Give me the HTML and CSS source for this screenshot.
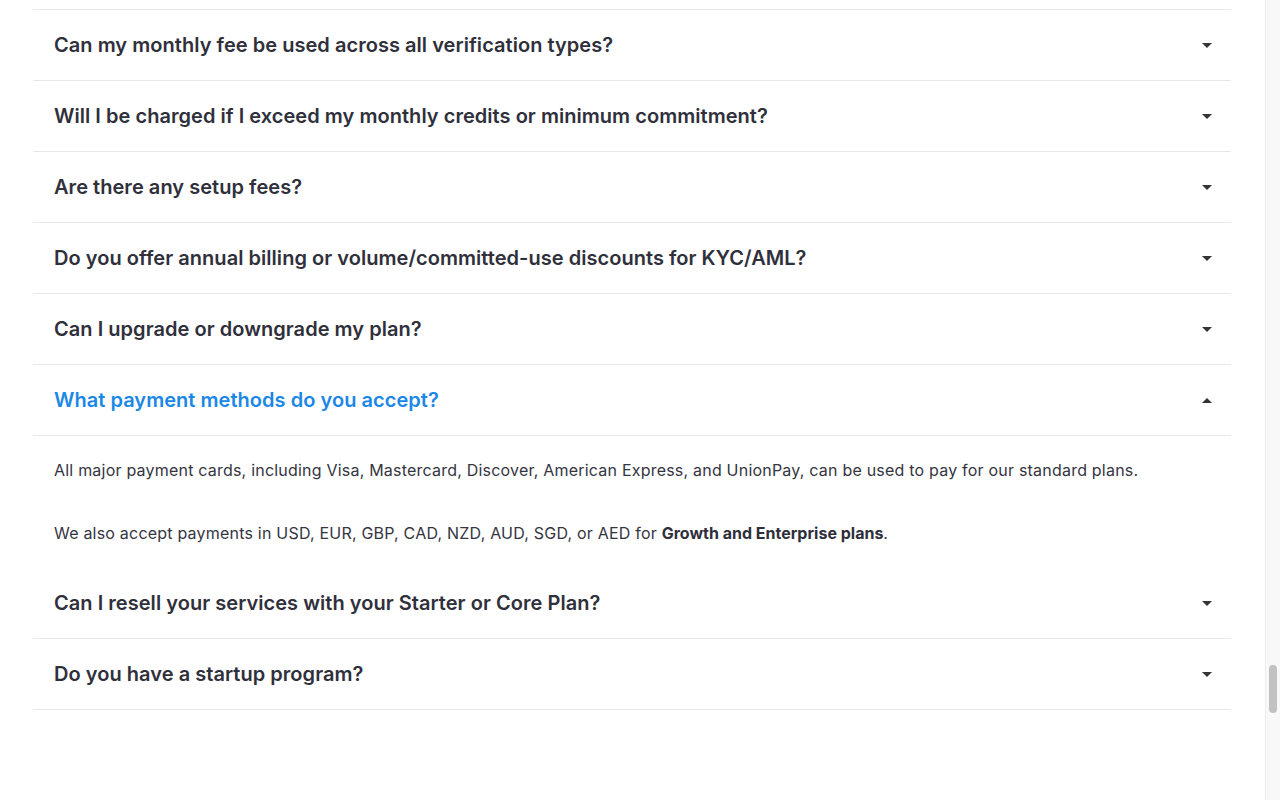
FILE: index.html
```html
<!DOCTYPE html>
<html lang="en">
<head>
<meta charset="utf-8">
<title>FAQ</title>
<link rel="stylesheet" href="styles.css">
</head>
<body>
<main class="page">
  <section class="faq">
    <div class="faq-item"><div class="q"><span class="q-text">Can my monthly fee be used across all verification types?</span><span class="caret down"></span></div></div>
    <div class="faq-item"><div class="q"><span class="q-text">Will I be charged if I exceed my monthly credits or minimum commitment?</span><span class="caret down"></span></div></div>
    <div class="faq-item"><div class="q"><span class="q-text">Are there any setup fees?</span><span class="caret down"></span></div></div>
    <div class="faq-item"><div class="q"><span class="q-text">Do you offer annual billing or volume/committed-use discounts for KYC/AML?</span><span class="caret down"></span></div></div>
    <div class="faq-item"><div class="q"><span class="q-text">Can I upgrade or downgrade my plan?</span><span class="caret down"></span></div></div>
    <div class="faq-item open"><div class="q"><span class="q-text">What payment methods do you accept?</span><span class="caret up"></span></div>
      <div class="answer">
        <p>All major payment cards, including Visa, Mastercard, Discover, American Express, and UnionPay, can be used to pay for our standard plans.</p>
        <p>We also accept payments in USD, EUR, GBP, CAD, NZD, AUD, SGD, or AED for <strong>Growth and Enterprise plans</strong>.</p>
      </div>
    </div>
    <div class="faq-item"><div class="q"><span class="q-text">Can I resell your services with your Starter or Core Plan?</span><span class="caret down"></span></div></div>
    <div class="faq-item"><div class="q"><span class="q-text">Do you have a startup program?</span><span class="caret down"></span></div></div>
  </section>
</main>
<div class="scrollbar"><div class="thumb"></div></div>
</body>
</html>
```
FILE: styles.css
```css
html, body {
  margin: 0;
  padding: 0;
  background: #ffffff;
}
body {
  font-family: "Inter", "Noto Sans", sans-serif;
  color: #2f2f3b;
  overflow: hidden;
}
.page {
  width: 1264px;
  padding-top: 9px;
}
.faq {
  width: 1198px;
  margin: 0 auto;
  border-top: 1px solid #e8e8ea;
}
.faq-item {
  border-bottom: 1px solid #e8e8ea;
}
.faq-item.open {
  border-bottom: none;
}
.q {
  height: 70px;
  display: flex;
  align-items: center;
  justify-content: space-between;
  padding: 0 19px 0 21px;
}
.q-text {
  font-size: 20px;
  font-weight: 600;
  letter-spacing: 0.04px;
  line-height: 24px;
  color: #2f303b;
}
.open .q-text {
  color: #1b87e6;
}
.open .q {
  border-bottom: 1px solid #e8e8ea;
}
.caret {
  width: 0;
  height: 0;
  border-left: 5px solid transparent;
  border-right: 5px solid transparent;
}
.caret.down {
  border-top: 5px solid #333338;
}
.caret.up {
  border-bottom: 5px solid #333338;
}
.answer {
  padding: 22px 21px 23px;
  font-size: 16px;
  line-height: 24px;
  letter-spacing: 0.21px;
  color: #35353f;
}
.answer p {
  margin: 0;
}
.answer p + p {
  margin-top: 39px;
}
.answer strong {
  font-weight: 700;
  letter-spacing: 0;
  color: #2f2f3b;
}
.scrollbar {
  position: fixed;
  top: 0;
  right: 0;
  width: 15px;
  height: 800px;
  background: #f8f8f8;
  border-left: 1px solid #ececec;
  box-sizing: border-box;
}
.thumb {
  position: absolute;
  left: 3px;
  top: 665px;
  width: 8px;
  height: 48px;
  border-radius: 4px;
  background: #c2c2c2;
}
```
